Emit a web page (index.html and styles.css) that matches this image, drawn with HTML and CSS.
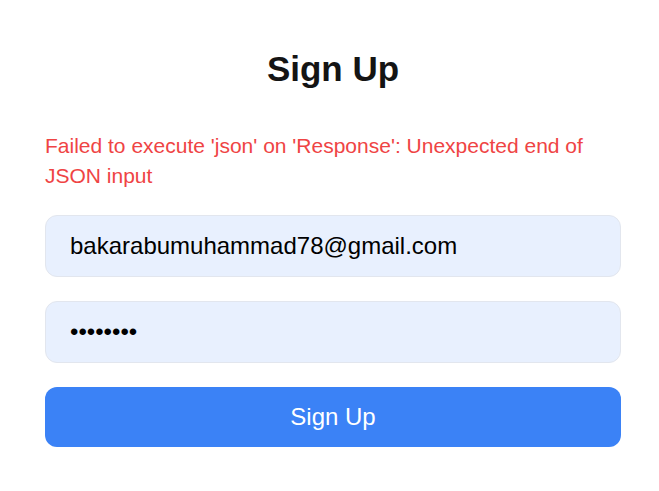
FILE: index.html
```html
<!DOCTYPE html>
<html lang="en">
<head>
<meta charset="utf-8">
<title>Sign Up</title>
<link rel="stylesheet" href="styles.css">
</head>
<body>
<main class="page">
  <form class="card">
    <h1 class="title">Sign Up</h1>
    <p class="error">Failed to execute 'json' on 'Response': Unexpected end of JSON input</p>
    <div class="fields">
      <input class="field" type="email" value="bakarabumuhammad78@gmail.com">
      <input class="field" type="password" value="12345678">
      <button class="submit" type="button">Sign Up</button>
    </div>
  </form>
</main>
</body>
</html>
```
FILE: styles.css
```css
html, body {
  margin: 0;
  padding: 0;
  background: #ffffff;
}
body {
  font-family: "Liberation Sans", Arial, sans-serif;
  color: #111111;
}
.page {
  padding: 47px 0 0 45px;
}
.card {
  width: 576px;
  display: flex;
  flex-direction: column;
}
.title {
  margin: 0;
  font-size: 35px;
  line-height: 44px;
  font-weight: 700;
  text-align: center;
  color: #141414;
}
.error {
  margin: 40px 0 0;
  font-size: 21px;
  line-height: 30px;
  color: #ef4444;
}
.fields {
  margin-top: 24px;
  display: flex;
  flex-direction: column;
  gap: 24px;
}
.field {
  box-sizing: border-box;
  height: 62px;
  width: 100%;
  padding: 0 24px;
  border: 1px solid #e2e6ee;
  border-radius: 12px;
  background: #e8f0fe;
  font-family: "Liberation Sans", Arial, sans-serif;
  font-size: 24px;
  color: #000000;
  outline: none;
}
.submit {
  box-sizing: border-box;
  height: 60px;
  width: 100%;
  border: none;
  border-radius: 12px;
  background: #3b82f6;
  color: #ffffff;
  font-family: "Liberation Sans", Arial, sans-serif;
  font-size: 24px;
}
```
